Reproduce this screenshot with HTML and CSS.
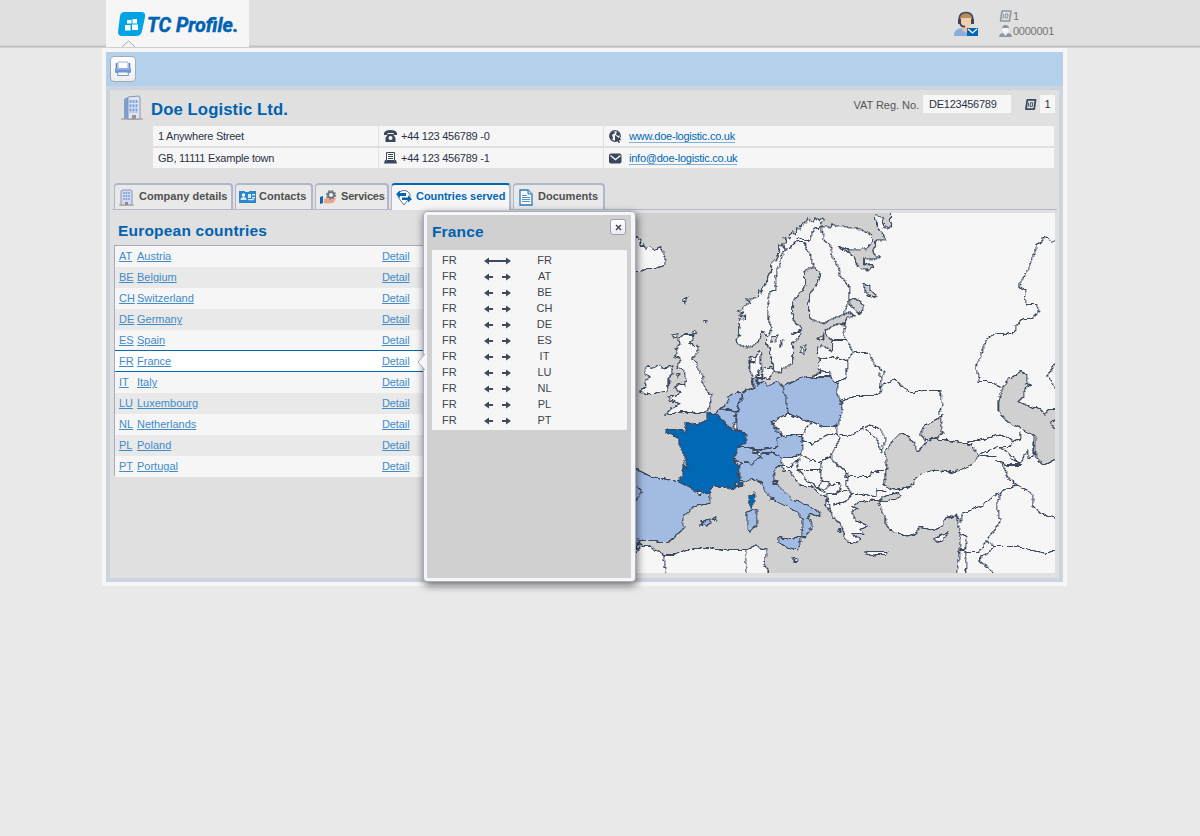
FILE: index.html
```html
<!DOCTYPE html>
<html lang="en">
<head>
<meta charset="utf-8">
<title>TC Profile</title>
<link rel="stylesheet" href="styles.css">
</head>
<body>
<header class="top">
  <div class="logo">
    <svg width="143" height="47" viewBox="0 0 143 47">
      <path d="M18 12H35q5 0 4 5L36 31q-1 5-6 5H16q-4 0-4-4L14 16q1-4 4-4z" fill="#00a4e4"/>
      <path d="M21 20h4.500v3.500h-4.500zM26.500 19h4.500v4.500h-4.500zM19 25h5.500v5.500h-5.500zM26 24.500h6v5.500h-6z" fill="#fff"/>
      <text x="41" y="32" class="brand" textLength="91.500" lengthAdjust="spacingAndGlyphs">TC Profile.</text>
      <path d="M16 47L22.500 41L29 47" fill="#f6f6f6" stroke="#aaa"/>
    </svg>
  </div>
  <div class="user">
    <svg width="26" height="28" viewBox="0 0 26 28">
      <path d="M1 26q0-8 9-8t9 8z" fill="#86aee0"/>
      <path d="M9 15h8v5l-4 3-4-3z" fill="#efc0a0"/>
      <ellipse cx="13" cy="11" rx="6" ry="7.500" fill="#f3cdb0"/>
      <path d="M6.500 10q0-7 6.500-7t6.500 7l-2-2H9z" fill="#b98a5c"/>
      <path d="M6 10q0-7.500 7-7.500t7 7.500" fill="none" stroke="#3d4658" stroke-width="1.600"/>
      <path d="M5 9h3v5H5zM18 9h3v5h-3z" fill="#3d4658"/>
      <path d="M7 13q1 4 5 3.500" stroke="#3d4658" stroke-width="1.800" fill="none"/>
      <path d="M14 18h11v8H14z" fill="#0065b3"/>
      <path d="M15 19l4.500 4L24 19" stroke="#fff" stroke-width="1.300" fill="none"/>
    </svg>
    <div class="ids">
      <div><svg width="13" height="12" viewBox="0 0 13 12"><path d="M3 1h9l-1.500 10h-9z" fill="none" stroke="#8d96a2" stroke-width="1.600" stroke-linejoin="round"/><path d="M4.500 4L4 8.500M6.500 4h2.500l-.5 4h-2.500z" stroke="#8d96a2" fill="none"/></svg>1</div>
      <div><svg width="13" height="13" viewBox="0 0 13 13"><path d="M0 12l1-3 3-1h5l3 1 1 3z" fill="#8d96a2"/><circle cx="6.500" cy="4.500" r="3.400" fill="#f6f6f6"/><path d="M3 4q0-4 3.500-4T10 4l-1-1H4z" fill="#8d96a2"/><path d="M4 8l2.500 3L9 8z" fill="#e8e8e8"/></svg>0000001</div>
    </div>
  </div>
</header>
<main class="frame">
  <div class="toolbar"><button class="print"><svg width="18" height="16" viewBox="0 0 18 16"><path d="M4 7V1h10v6" fill="#fff" stroke="#9ab6dd"/><path d="M2.500 2v6M15.500 2v6" stroke="#5681bd" stroke-width="1.500"/><rect x="1" y="7" width="16" height="5" rx="1" fill="#6f98d0"/><path d="M2 8h14" stroke="#a9c8f0"/><path d="M4 11h10l.5 3.500h-11z" fill="#f7faff" stroke="#7797c5"/></svg></button></div>
  <div class="panel">
    <div class="company">
      <svg class="house" width="24" height="26" viewBox="0 0 24 26"><path d="M1 24h22" stroke="#aaa" stroke-width="1.500"/><path d="M4 4l4-2v22H4z" fill="#7e9ed0"/><path d="M8 2l11-1 1 2v21H8z" fill="#dfe5f0" stroke="#8995ae"/><path d="M10.500 5v13M13.500 5v13M16.500 5v13" stroke="#7ba0e0" stroke-width="2" stroke-dasharray="3 1.200"/><path d="M12 20h4v4h-4z" fill="#9b938c"/></svg>
      <h1>Doe Logistic Ltd.</h1>
      <span class="vat">VAT Reg. No.</span><span class="box vatno">DE123456789</span>
      <svg class="idicon" width="13" height="11" viewBox="0 0 13 12"><path d="M3 1h9l-1.500 10h-9z" fill="none" stroke="#3a465c" stroke-width="1.900" stroke-linejoin="round"/><path d="M4.500 4L4 8.500M6.500 4h2.500l-.5 4h-2.500z" stroke="#3a465c" fill="none"/></svg>
      <span class="box one">1</span>
    </div>
    <div class="info">
      <div class="ad a1">1 Anywhere Street</div>
      <div><svg width="13" height="12" viewBox="0 0 13 12"><path d="M0 5V3q1-3 6.500-3T13 3v2H9.500V3h-6v2z" fill="#3a465c"/><path d="M4 4h5l2.500 4v4h-10V8z" fill="#3a465c"/><circle cx="6.500" cy="8" r="2" fill="#f6f6f6"/></svg>+44 123 456789 -0</div>
      <div class="w"><svg width="13" height="13" viewBox="0 0 13 13"><circle cx="6" cy="6" r="5.300" fill="#f6f6f6" stroke="#3a465c" stroke-width="1.200"/><path d="M1 4q2-3 4-3l1 2-3 2 1 3-1 2q-3-2-2-6zM8 1l3 3-1 2-3-1z" fill="#3a465c"/><path d="M6 5l6.500 5-2.500.2 1 2.300-1.500.5-1-2.300L6 12z" fill="#3a465c"/></svg><a>www.doe-logistic.co.uk</a></div>
      <div class="ad a2">GB, 11111 Example town</div>
      <div><svg width="13" height="12" viewBox="0 0 13 12"><path d="M2.500.5h8v8h-8z" fill="#fff" stroke="#3a465c"/><path d="M4 2.500h5M4 4.500h5M4 6.500h5" stroke="#3a465c"/><path d="M1 8h1v1h9V8h1l1 3.500H0z" fill="#3a465c"/></svg>+44 123 456789 -1</div>
      <div class="w"><svg width="13" height="12" viewBox="0 0 13 12"><rect y="1.500" width="12.500" height="10" rx="2" fill="#3a465c"/><path d="M1.500 3.500l5 4 5-4" fill="none" stroke="#f6f6f6" stroke-width="1.400"/></svg><a class="mail">info@doe-logistic.co.uk</a></div>
    </div>
    <nav class="tabs">
      <div class="tab t1"><svg width="16" height="17" viewBox="0 0 16 17"><path d="M0 16h15" stroke="#999"/><path d="M2 2l2-1h8l1 1v14H2z" fill="#d2dcee" stroke="#8995ae"/><path d="M5 3v9M7.500 3v9M10 3v9" stroke="#7898dc" stroke-width="1.400" stroke-dasharray="2 1"/><path d="M6 13h3v3H6z" fill="#938b84"/></svg><span>Company details</span></div>
      <div class="tab t2"><svg width="17" height="14" viewBox="0 0 17 14"><path d="M0 1h6v1h4V1h7v12H0z" fill="#2b86cc"/><circle cx="4.500" cy="5" r="1.700" fill="#fff"/><path d="M1.500 10q0-3 3-3t3 3zM9 4h3v4H9zM13 4h3v1.500h-3zM13 7h3v1.500h-3zM9 9h6v1.200H9z" fill="#d8eaf8"/></svg><span>Contacts</span></div>
      <div class="tab t3"><svg width="17" height="16" viewBox="0 0 17 16"><circle cx="11" cy="6" r="3" fill="#eee" stroke="#6b7582" stroke-width="2"/><circle cx="11" cy="6" r="4.500" fill="none" stroke="#6b7582" stroke-width="1.300" stroke-dasharray="1.800 1.730"/><path d="M4 10l3-1 3 2 5-2 1 1-3 4-9 .5z" fill="#f2a384"/><path d="M0 8l3-1v7l-3 1z" fill="#1266b0"/></svg><span>Services</span></div>
      <div class="tab t4 on"><svg width="16" height="16" viewBox="0 0 16 16"><path d="M2 7q-1-4 3-6 3-1 6 0 4 2 3 6l-6 8z" fill="#fff" stroke="#65758a"/><path d="M0 4l4-3.500V3h6v3H4v2z" fill="#0065b3"/><path d="M16 9l-4-3.500V7.500H6v2.500h6v2.500z" fill="#0065b3"/></svg><span>Countries served</span></div>
      <div class="tab t5"><svg width="14" height="17" viewBox="0 0 14 17"><path d="M1 1h8l4 4v11H1z" fill="#f7fbff" stroke="#2878b8" stroke-width="1.300"/><path d="M9 1v4h4" fill="#c4dcf0" stroke="#2878b8"/><path d="M3 6.500h5M3 8.500h8M3 10.500h8M3 12.500h8" stroke="#5a93c4"/></svg><span>Documents</span></div>
    </nav>
    <section class="content">
      <div class="left">
        <h2>European countries</h2>
        <div class="list">
          <div class="row"><a class="cc">AT</a><a>Austria</a><a class="det">Detail</a></div>
          <div class="row"><a class="cc">BE</a><a>Belgium</a><a class="det">Detail</a></div>
          <div class="row"><a class="cc">CH</a><a>Switzerland</a><a class="det">Detail</a></div>
          <div class="row"><a class="cc">DE</a><a>Germany</a><a class="det">Detail</a></div>
          <div class="row"><a class="cc">ES</a><a>Spain</a><a class="det">Detail</a></div>
          <div class="row sel"><a class="cc">FR</a><a>France</a><a class="det">Detail</a></div>
          <div class="row"><a class="cc">IT</a><a>Italy</a><a class="det">Detail</a></div>
          <div class="row"><a class="cc">LU</a><a>Luxembourg</a><a class="det">Detail</a></div>
          <div class="row"><a class="cc">NL</a><a>Netherlands</a><a class="det">Detail</a></div>
          <div class="row"><a class="cc">PL</a><a>Poland</a><a class="det">Detail</a></div>
          <div class="row"><a class="cc">PT</a><a>Portugal</a><a class="det">Detail</a></div>
        </div>
      </div>
      <svg class="map" width="419" height="360" viewBox="18 24 1257 1080">
        <defs><filter id="rough" filterUnits="userSpaceOnUse" x="-30" y="-30" width="1360" height="1220" color-interpolation-filters="sRGB"><feTurbulence type="fractalNoise" baseFrequency="0.050" numOctaves="2" seed="4"/><feDisplacementMap in="SourceGraphic" scale="13" xChannelSelector="R" yChannelSelector="G"/></filter></defs>
        <rect width="1300" height="1140" fill="#d0d0d0"/>
        <g class="land" filter="url(#rough)">
          <!-- northern mainland -->
          <path d="M1320 500V0H786L780 42 785 60 775 70 760 64 758 48 762 40 748 32 735 30 731 42 740 50 742 66 755 82 767 104 742 104 735 110 736 128 727 138 735 150 748 155 735 163 702 160 702 178 725 178 728 188 718 194 690 190 678 176 672 155 650 138 635 128 650 134 690 135 712 128 725 114 725 90 708 78 672 72 650 66 630 62 612 64 605 58 600 70 590 60 580 66 570 58 583 45 575 38 565 50 555 38 550 52 540 50 535 38 528 52 515 58 512 70 498 72 500 85 485 80 480 100 460 98 470 110 458 118 462 132 445 118 448 140 440 165 422 180 425 200 415 208 410 235 398 245 395 262 385 255 385 275 350 285 360 292 345 300 335 312 322 318 340 322 330 335 350 330 350 342 325 345 330 370 328 392 317 405 330 420 350 428 375 418 390 400 398 380 410 395 410 415 418 430 420 450 430 480 432 500 455 503 455 490 488 475 490 440 488 410 505 400 515 370 490 350 485 320 488 290 510 265 528 240 522 200 535 192 555 188 570 205 560 240 540 265 535 300 540 340 580 355 610 340 640 328 660 320 672 332 650 340 645 358 620 358 585 375 590 395 608 405 605 440 590 430 575 422 562 430 568 465 562 490 572 497 550 512"/>
          <!-- southern mainland -->
          <g transform="translate(0 495)">
            <path d="M1320 5V660H980V605L985 570 990 530 990 495 983 460 978 432 965 440 945 450 940 465 915 478 870 470 858 490 835 498 795 490 790 480 778 480 768 462 765 440 755 430 755 410 743 405 748 392 720 390 690 395 665 410 685 415 665 425 675 450 690 455 715 470 690 478 700 490 670 492 690 510 675 520 655 520 640 495 640 475 618 450 605 430 588 405 590 380 575 375 545 350 510 345 490 320 480 298 460 305 455 290 440 290 432 305 435 335 460 360 490 390 530 405 572 430 570 442 540 430 535 445 548 470 525 500 515 502 520 470 520 450 500 425 470 410 430 390 405 365 395 340 365 325 345 335 320 350 310 360 270 348 245 350 240 372 240 400 190 410 155 450 162 475 135 500 110 518 70 515 35 510 20 520H0V290L20 298 60 318 145 335 155 320 160 290 165 260 150 235 145 205 110 190 110 178 135 178 170 185 168 158 200 165 232 150 235 128 255 130 275 115 285 108 295 80 330 68 345 65 370 55 368 25 358 -5 358 -30 380 -40 385 -55 395 -50 390 -25 398 -5 385 5 385 40 400 35 412 50 440 35 462 50 523 18 550 20 570 5"/>
            <path class="served" d="M370 25L378 18 385 45 400 35 412 50 440 35 462 50 458 65 466 80 475 132 425 155 450 185 460 200 440 205 445 230 400 238 345 232 325 235 350 192 320 180 320 150 312 142 325 120 325 95 345 65 370 55zM285 108L295 80 310 70 335 68 338 85 325 100 325 120 310 125 290 118 275 120zM252 130L275 118 318 125 320 150 310 170 325 183 300 175 280 155zM462 50L500 30 523 18 545 25 600 15 625 45 620 65 638 115 620 168 580 170 545 155 510 145 475 132 466 80 458 65zM440 205L490 193 515 198 520 215 512 250 490 262 455 262 430 248 390 248 380 240 400 238 445 230zM325 235L345 232 380 235 385 250 395 265 375 270 365 285 350 272 330 280 310 265zM325 285L350 272 365 285 375 270 395 265 395 250 430 248 455 262 458 285 440 290 432 305 435 335 460 360 490 390 530 405 572 430 570 442 540 430 535 445 548 470 525 500 515 502 520 450 500 425 470 410 430 390 405 365 395 340 365 325 345 335 330 330z"/>
            <path class="served" d="M0 290L20 298 60 318 145 335 200 365 240 372 240 400 190 410 155 450 162 475 135 500 110 518 70 515 35 510 20 520H0zM348 427L380 415 380 470 370 475 360 487 350 478 350 440zM443 503L475 507 515 498 505 540 480 535 443 518zM218 455L240 447 242 460 230 465zM209 462h8v7h-8zM248 445l9-4 2 9zM20 350L37 360 28 380 18 390"/>
            <path class="active" d="M235 128L255 130 280 155 300 175 350 192 345 215 325 235 310 265 325 290 325 320 338 345 320 350 310 360 270 348 245 350 240 372 200 365 145 335 155 320 160 280 172 298 165 260 150 235 145 205 110 190 107 178 135 175 170 185 165 158 200 165 232 150zM375 363V395L365 415 355 400 357 378 370 375z"/>
            <!-- north africa -->
            <path d="M0 550L25 545 25 510 38 530 60 528 100 555 135 555 165 540 230 532 270 540 350 538 378 525 400 540 410 535 410 560 400 575 412 605V650H0zM100 555L115 650M348 538V650"/>
            <!-- microstates and Mediterranean islands -->
            <path d="M371 240h9v9h-9zM203 363h9v9h-9zM316 339h9v9h-9zM430 333h9v9h-9zM424 382h8v8h-8zM490 565h10v9h-10zM623 477h8v8h-8zM22 522h8v12h-8zM705 545h68l-5 9h-30l-5 7-25-6zM912 506L950 488 940 510 925 520z"/>
            <!-- inland borders -->
            <path class="line" d="M425 155L475 132 510 145 545 155 520 190 490 193 460 200 440 185zM520 190L515 215 545 222 590 195 620 190 620 168M545 155L580 170 620 168M512 250L540 270 565 275 600 262 630 205 620 190M512 250L505 270 480 290 458 285M505 270L500 300 515 298 570 300 575 275M500 295L535 335 568 355 585 370M570 300L575 330 565 350 585 362 600 345 595 335 575 335M600 262L620 285 650 305 645 320 720 320 725 305 770 300M655 305L650 345 665 375 690 370 735 380 740 360 770 365M600 345L625 340 632 358 610 372 590 375 605 430M610 372L650 360M610 405L640 400 665 375M630 195L660 197 700 175 740 205 755 250M700 175L720 165 750 175 765 205 755 245M620 168L620 190M638 120L635 90 670 80 745 75 755 60 750 10M755 55L760 40 795 30 840 68 880 62 930 62 932 80 940 100 925 130"/>
            <path class="line" d="M990 220L1040 212 1110 195 1150 210 1145 228 1105 230 1040 255M1110 230L1150 260 1170 285 1130 285 1100 270M1115 280L1140 330 1160 345 1205 370 1210 410 1235 430 1290 445M1160 345L1110 365 1060 405 1000 430 990 455 978 432M1110 365L1100 410 1110 455 1070 510 1045 548 1005 548M1070 510L1095 530 1160 530 1245 550 1290 538M1095 530L1045 570 1100 615M990 490L1012 500 1005 540 1010 570 1008 640M990 540L1005 540M1040 255L1095 260"/>
          </g>
          <path class="line" d="M410 395L425 370 415 340 412 290 420 260 435 255 440 200 460 140 480 125 500 110 525 115 545 165 550 190M500 100L540 110 550 70 575 65 580 105 600 120 610 160 630 200 640 230 660 245 655 290 640 325M645 355L640 385 650 405 670 440 650 470 648 520 620 530M608 405L650 405M565 465L610 455 650 470M570 497L600 500 600 515 550 520M670 440L715 445 735 480 765 500 750 530M1290 100L1275 107 1265 112 1255 102 1240 98 1235 112 1218 118 1215 145 1195 190 1165 245 1190 255 1185 280 1190 298 1220 298 1225 320 1210 340 1180 340 1160 360 1155 380 1135 388 1100 385 1065 405 1055 455 1040 470 1038 490 1048 530 1080 530 1115 548M1275 478L1252 512 1278 550"/>
          <!-- iceland, faroes, british isles, baltic islands -->
          <path d="M0 110L20 95 32 105 30 125 42 120 45 132 60 125 70 135 80 130 95 125 100 150 110 165 105 180 80 190 55 190 30 200H0zM158 283L170 278 165 294 158 292zM221 346h9v7h-9zM50 485L65 490 85 480 100 490 125 480 130 505 115 520 115 545 105 560 70 565 45 568 30 555 50 545 48 525 60 515 45 505zM145 400L160 390 190 390 188 405 178 415 205 425 200 445 185 465 200 475 218 520 225 555 245 570 240 600 230 620 200 625 160 620 130 625 105 628 125 610 150 595 120 585 118 575 150 565 135 550 145 535 165 540 168 510 160 495 140 490 150 460 135 455 145 430 135 435 150 415zM128 390l15-4-3 12-10-2zM189 377h8v8h-8zM140 508l9 2-5 8zM400 490L425 485 430 500 415 525 400 520 395 505zM378 505l15 5 5 10-15-2zM515 425L527 420 520 445 511 442zM562 400L580 385 580 405zM360 455l15 4-2 12-12-2z"/>
          <path class="sea" d="M425 392L445 390 435 410 425 415zM452 408L457 405 453 430zM475 385L505 382 512 375 490 388zM660 285L675 280 700 300 698 315 685 325 672 310 658 300zM700 235L718 240 720 255 738 270 735 280 715 272 705 255zM627 128L655 134 658 142 632 135z"/>
          <!-- black sea, azov, marmara, caspian -->
          <path class="sea" d="M765 740L790 705 810 685 835 690 840 705 850 715 862 740 880 720 905 700 925 702 980 710 1025 720 1045 750 1035 770 1015 785 970 802 910 795 865 810 840 845 790 855 760 840 770 790zM872 688L885 660 925 640 938 625 930 645 938 685 920 698 885 705zM760 875L785 868 805 862 815 868 800 882 770 890 750 888zM1120 545L1135 520 1160 510 1175 500 1190 510 1192 535 1202 540 1185 550 1180 575 1165 590 1200 605 1230 610 1245 632 1255 610 1300 615V755L1240 780 1225 770 1215 735 1210 690 1170 670 1125 645 1105 620 1105 585z"/>
          <path class="line" d="M1170 680L1172 700 1150 710M1210 690L1220 700 1210 720 1215 755 1195 760 1190 740 1170 775 1140 760M1290 645L1265 650 1268 670 1290 680"/>
        </g>
      </svg>
      <aside class="popup">
        <svg class="arrow" width="8" height="16" viewBox="0 0 8 16"><path d="M8 0L1 8l7 8" fill="#f6f6f6" stroke="#a4abc2"/></svg>
        <div class="pop-in">
          <div class="pop-head"><h2>France</h2><button><svg width="7" height="7"><path d="M1 1l5 5M6 1L1 6" stroke="#3a465c" stroke-width="1.400"/></svg></button></div>
          <div class="routes">
            <div><span>FR</span><svg width="27" height="8"><path d="M0 4l5-3.500v2.500h17V.5l5 3.500-5 3.500V5H5v2.500z"/></svg><span>FR</span></div>
            <div><span>FR</span><svg width="27" height="8"><path d="M0 4l5-3.500v2.500h4v2H5v2.500zM27 4l-5-3.500v2.500h-4v2h4v2.500z"/></svg><span>AT</span></div>
            <div><span>FR</span><svg width="27" height="8"><path d="M0 4l5-3.500v2.500h4v2H5v2.500zM27 4l-5-3.500v2.500h-4v2h4v2.500z"/></svg><span>BE</span></div>
            <div><span>FR</span><svg width="27" height="8"><path d="M0 4l5-3.500v2.500h4v2H5v2.500zM27 4l-5-3.500v2.500h-4v2h4v2.500z"/></svg><span>CH</span></div>
            <div><span>FR</span><svg width="27" height="8"><path d="M0 4l5-3.500v2.500h4v2H5v2.500zM27 4l-5-3.500v2.500h-4v2h4v2.500z"/></svg><span>DE</span></div>
            <div><span>FR</span><svg width="27" height="8"><path d="M0 4l5-3.500v2.500h4v2H5v2.500zM27 4l-5-3.500v2.500h-4v2h4v2.500z"/></svg><span>ES</span></div>
            <div><span>FR</span><svg width="27" height="8"><path d="M0 4l5-3.500v2.500h4v2H5v2.500zM27 4l-5-3.500v2.500h-4v2h4v2.500z"/></svg><span>IT</span></div>
            <div><span>FR</span><svg width="27" height="8"><path d="M0 4l5-3.500v2.500h4v2H5v2.500zM27 4l-5-3.500v2.500h-4v2h4v2.500z"/></svg><span>LU</span></div>
            <div><span>FR</span><svg width="27" height="8"><path d="M0 4l5-3.500v2.500h4v2H5v2.500zM27 4l-5-3.500v2.500h-4v2h4v2.500z"/></svg><span>NL</span></div>
            <div><span>FR</span><svg width="27" height="8"><path d="M0 4l5-3.500v2.500h4v2H5v2.500zM27 4l-5-3.500v2.500h-4v2h4v2.500z"/></svg><span>PL</span></div>
            <div><span>FR</span><svg width="27" height="8"><path d="M0 4l5-3.500v2.500h4v2H5v2.500zM27 4l-5-3.500v2.500h-4v2h4v2.500z"/></svg><span>PT</span></div>
          </div>
        </div>
      </aside>
    </section>
  </div>
</main>
</body>
</html>
```
FILE: styles.css
```css
* { box-sizing: border-box; }
body { margin: 0; background: #e9e9e9; font: 11px/14px "Liberation Sans", Arial, sans-serif; color: #2b3446; height: 836px; overflow: hidden; }
h1, h2 { margin: 0; color: #0062b1; }
svg { display: block; flex: none; }
button { padding: 0; display: flex; align-items: center; justify-content: center; background: linear-gradient(#fff, #ededf0); }
.top { height: 48px; padding: 0 146px 0 106px; display: flex; justify-content: space-between; background: linear-gradient(#e0e0e0 44px, #cfcfd1 46px, #adadad 47px, #f2f2f2 48px); }
.logo { width: 143px; height: 47px; background: #f6f6f6; }
.brand { font: italic 700 21px Roboto, sans-serif; fill: #0062b1; stroke: #0062b1; stroke-width: .5; }
.user { display: flex; padding-top: 10px; gap: 20px; color: #747474; }
.ids { display: flex; flex-direction: column; gap: 1px; margin-top: -1px; }
.ids div { display: flex; align-items: center; gap: 1px; height: 14px; width: 55px; letter-spacing: -.25px; }
.frame { width: 965px; height: 538px; margin: 0 0 0 102px; padding: 4px; background: #f6f6f6; }
.toolbar { height: 34px; padding: 4px; background: #b3d1ea; }
.print { width: 26px; height: 26px; border: 1px solid #a4a9b6; border-radius: 4px; }
.panel { height: 496px; border: 4px solid #ced4df; background: #e0e0e0; }
.company { height: 36px; display: flex; align-items: flex-start; padding: 5px 4px 0 10px; }
.house { margin-right: 7px; }
h1 { font-size: 16.700px; line-height: 20px; margin-top: 5px; flex: 1; letter-spacing: .1px; }
.vat { margin: 3px 4px 0 0; color: #555; letter-spacing: -.05px; }
.box { background: #f6f6f6; height: 18px; line-height: 18px; }
.vatno { width: 88px; padding-left: 6px; letter-spacing: -.25px; }
.idicon { margin: 4px 3px 0 13px; }
.one { width: 15px; text-align: center; }
.info { display: grid; grid-template-columns: 225px 224px 450px; grid-auto-rows: 20px; gap: 2px 1px; margin: 0 4px 0 43px; letter-spacing: -.24px; }
.info div { background: #f6f6f6; display: flex; align-items: center; gap: 4px; padding-left: 5px; }
.info .w { gap: 7px; }
.info a { color: #0068b5; border-bottom: 1px solid #80b0d8; line-height: 12px; letter-spacing: -.24px; }
.tabs { height: 27px; margin: 15px 2px 0; padding-left: 2px; border-bottom: 1px solid #b3b9c9; display: flex; gap: 2px; }
.tab { height: 26px; border: 1px solid #a4abbd; border-width: 2px 2px 0 1px; border-color: #b0b7ca; border-radius: 4px 4px 0 0; background: #e9e9e9; display: flex; align-items: center; gap: 4px; padding-left: 4px; font-weight: bold; color: #505050; white-space: nowrap; }
.tab span { letter-spacing: .03px; margin-top: -2px; }
.t1 { width: 119px; } .t2 { width: 78px; padding-left: 3px; gap: 3px; } .t3 { width: 74px; } .t4 { width: 120px; } .t5 { width: 92px; padding-left: 5px; gap: 5px; }
.t3 span { letter-spacing: -.2px; }
.tab.on { height: 27px; background: #f6f6f6; border-top-color: #0068b5; color: #0068b5; }
.tab.on span { margin-top: -3px; letter-spacing: -.03px; }
.content { position: relative; height: 369px; display: flex; justify-content: space-between; padding: 3px 4px 0 4px; }
.left { width: 400px; }
h2 { font-size: 15.500px; line-height: 18px; }
.left h2 { margin: 9px 4px 5px; letter-spacing: .2px; }
.list { border: 1px solid #a4abc2; height: 231px; }
.row { height: 21px; display: flex; padding: 3px 4px 0; background: #f6f6f6; color: #418bc8; }
.row:nth-child(even) { background: #e9e9e9; }
.list .row.sel { background: #fff; border: solid #0068b5; border-width: 1px 0; height: 22px; margin-top: -1px; }
.row a { text-decoration: underline; height: 14px; }
.row .cc { width: 18px; flex: none; }
.row .det { position: absolute; left: 272px; letter-spacing: -.1px; }
.land path { fill: #f6f6f6; stroke: #3c495f; stroke-width: 3.600; shape-rendering: crispEdges; }
.land .served { fill: #a2bbe3; }
.land .active { fill: #0068b5; }
.land .line { fill: none; }
.land .sea { fill: #d0d0d0; }
.popup { position: absolute; left: 313px; top: 1px; width: 213px; height: 371px; background: #f6f6f6; border: 1px solid #a4abc2; border-radius: 4px; box-shadow: 1px 3px 8px rgba(0,0,0,.6); padding: 3px 4px 3px 3px; }
.arrow { position: absolute; left: -7px; top: 142px; }
.pop-in { height: 363px; background: #d0d0d0; padding: 4px 4px 4px 5px; }
.pop-head { height: 31px; display: flex; justify-content: space-between; align-items: flex-start; padding: 0 1px 0 0; }
.pop-head h2 { margin-top: 4px; letter-spacing: .15px; }
.pop-head button { width: 16px; height: 16px; border: 1px solid #9aa1b6; border-radius: 3px; }
.routes { background: #f6f6f6; height: 180px; padding: 2px 0; color: #41444c; }
.routes div { height: 16px; display: grid; grid-template-columns: 52px 27px 67px; align-items: center; }
.routes div span:first-child { padding-left: 10px; }
.routes div span:last-child { text-align: center; }
.routes svg { fill: #3d495e; margin-top: 1px; }
```
